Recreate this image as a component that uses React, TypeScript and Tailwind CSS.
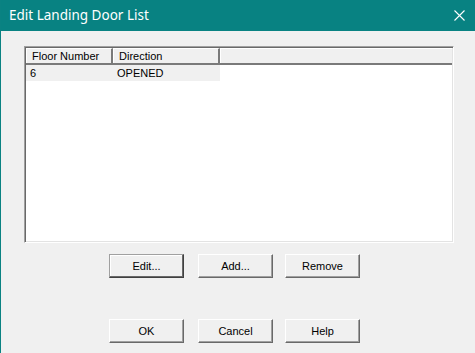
import React from "react";

const ui = { fontFamily: '"Liberation Sans", Arial, sans-serif' };

const Btn: React.FC<{ label: string; primary?: boolean; className?: string }> = ({ label, primary, className }) => (
  <button
    className={
      "h-[24px] w-[75px] bg-[#f0f0f0] text-[11px] text-black flex items-center justify-center " +
      (primary
        ? "border border-t-[#a0a0a0] border-l-[#a0a0a0] border-r-[#404040] border-b-[#404040] shadow-[inset_-1px_-1px_0_#696969,inset_1px_1px_0_#ffffff] "
        : "border border-t-white border-l-white border-r-[#696969] border-b-[#696969] shadow-[inset_-1px_-1px_0_#a0a0a0] ") +
      (className ?? "")
    }
  >
    {label}
  </button>
);

const HeaderCell: React.FC<{ label: string; w: string }> = ({ label, w }) => (
  <div
    className={
      w +
      " h-full flex items-center pl-[5px] border-t border-l border-t-white border-l-white border-r-2 border-r-[#7a7a7a] bg-[#f0f0f0]"
    }
  >
    {label}
  </div>
);

export default function App() {
  const rows = [{ floor: "6", dir: "OPENED" }];
  return (
    <div className="w-[475px] h-[353px] bg-[#f0f0f0] border-l border-[#0a8282] flex flex-col text-black" style={ui}>
      <div className="h-[31px] bg-[#088282] flex items-center justify-between pl-[8px] pr-[9px] shrink-0">
        <span className="text-white text-[13.5px]" style={{ fontFamily: '"Noto Sans", "Open Sans", sans-serif' }}>
          Edit Landing Door List
        </span>
        <svg width="11" height="11" viewBox="0 0 11 11" className="mr-[1px]">
          <path d="M0.5 0.5 L10.5 10.5 M10.5 0.5 L0.5 10.5" stroke="white" strokeWidth="1.1" />
        </svg>
      </div>

      <div className="ml-[23px] mt-[15px] w-[430px] h-[197px] border border-t-[#a0a0a0] border-l-[#a0a0a0] border-r-white border-b-white shadow-[inset_1px_1px_0_#696969,inset_-1px_-1px_0_#e3e3e3] p-[1px] shrink-0">
        <div className="bg-white w-full h-full flex flex-col text-[11px]">
          <div className="h-[17px] flex border-b-2 border-[#7a7a7a] shrink-0">
            <HeaderCell label="Floor Number" w="w-[87px]" />
            <HeaderCell label="Direction" w="w-[107px]" />
            <div className="flex-1 h-full border-t border-l border-t-white border-l-white bg-[#f0f0f0]" />
          </div>
          {rows.map((r, i) => (
            <div key={i} className="h-[16px] w-[194px] bg-[#f0f0f0] flex items-center">
              <span className="w-[87px] pl-[4px]">{r.floor}</span>
              <span className="pl-[4px]">{r.dir}</span>
            </div>
          ))}
        </div>
      </div>

      <div className="flex mt-[11px] ml-[108px] shrink-0">
        <Btn label="Edit..." primary />
        <Btn label="Add..." className="ml-[14px]" />
        <Btn label="Remove" className="ml-[12px]" />
      </div>

      <div className="flex mt-[41px] ml-[108px] shrink-0">
        <Btn label="OK" />
        <Btn label="Cancel" className="ml-[14px]" />
        <Btn label="Help" className="ml-[12px]" />
      </div>
    </div>
  );
}
